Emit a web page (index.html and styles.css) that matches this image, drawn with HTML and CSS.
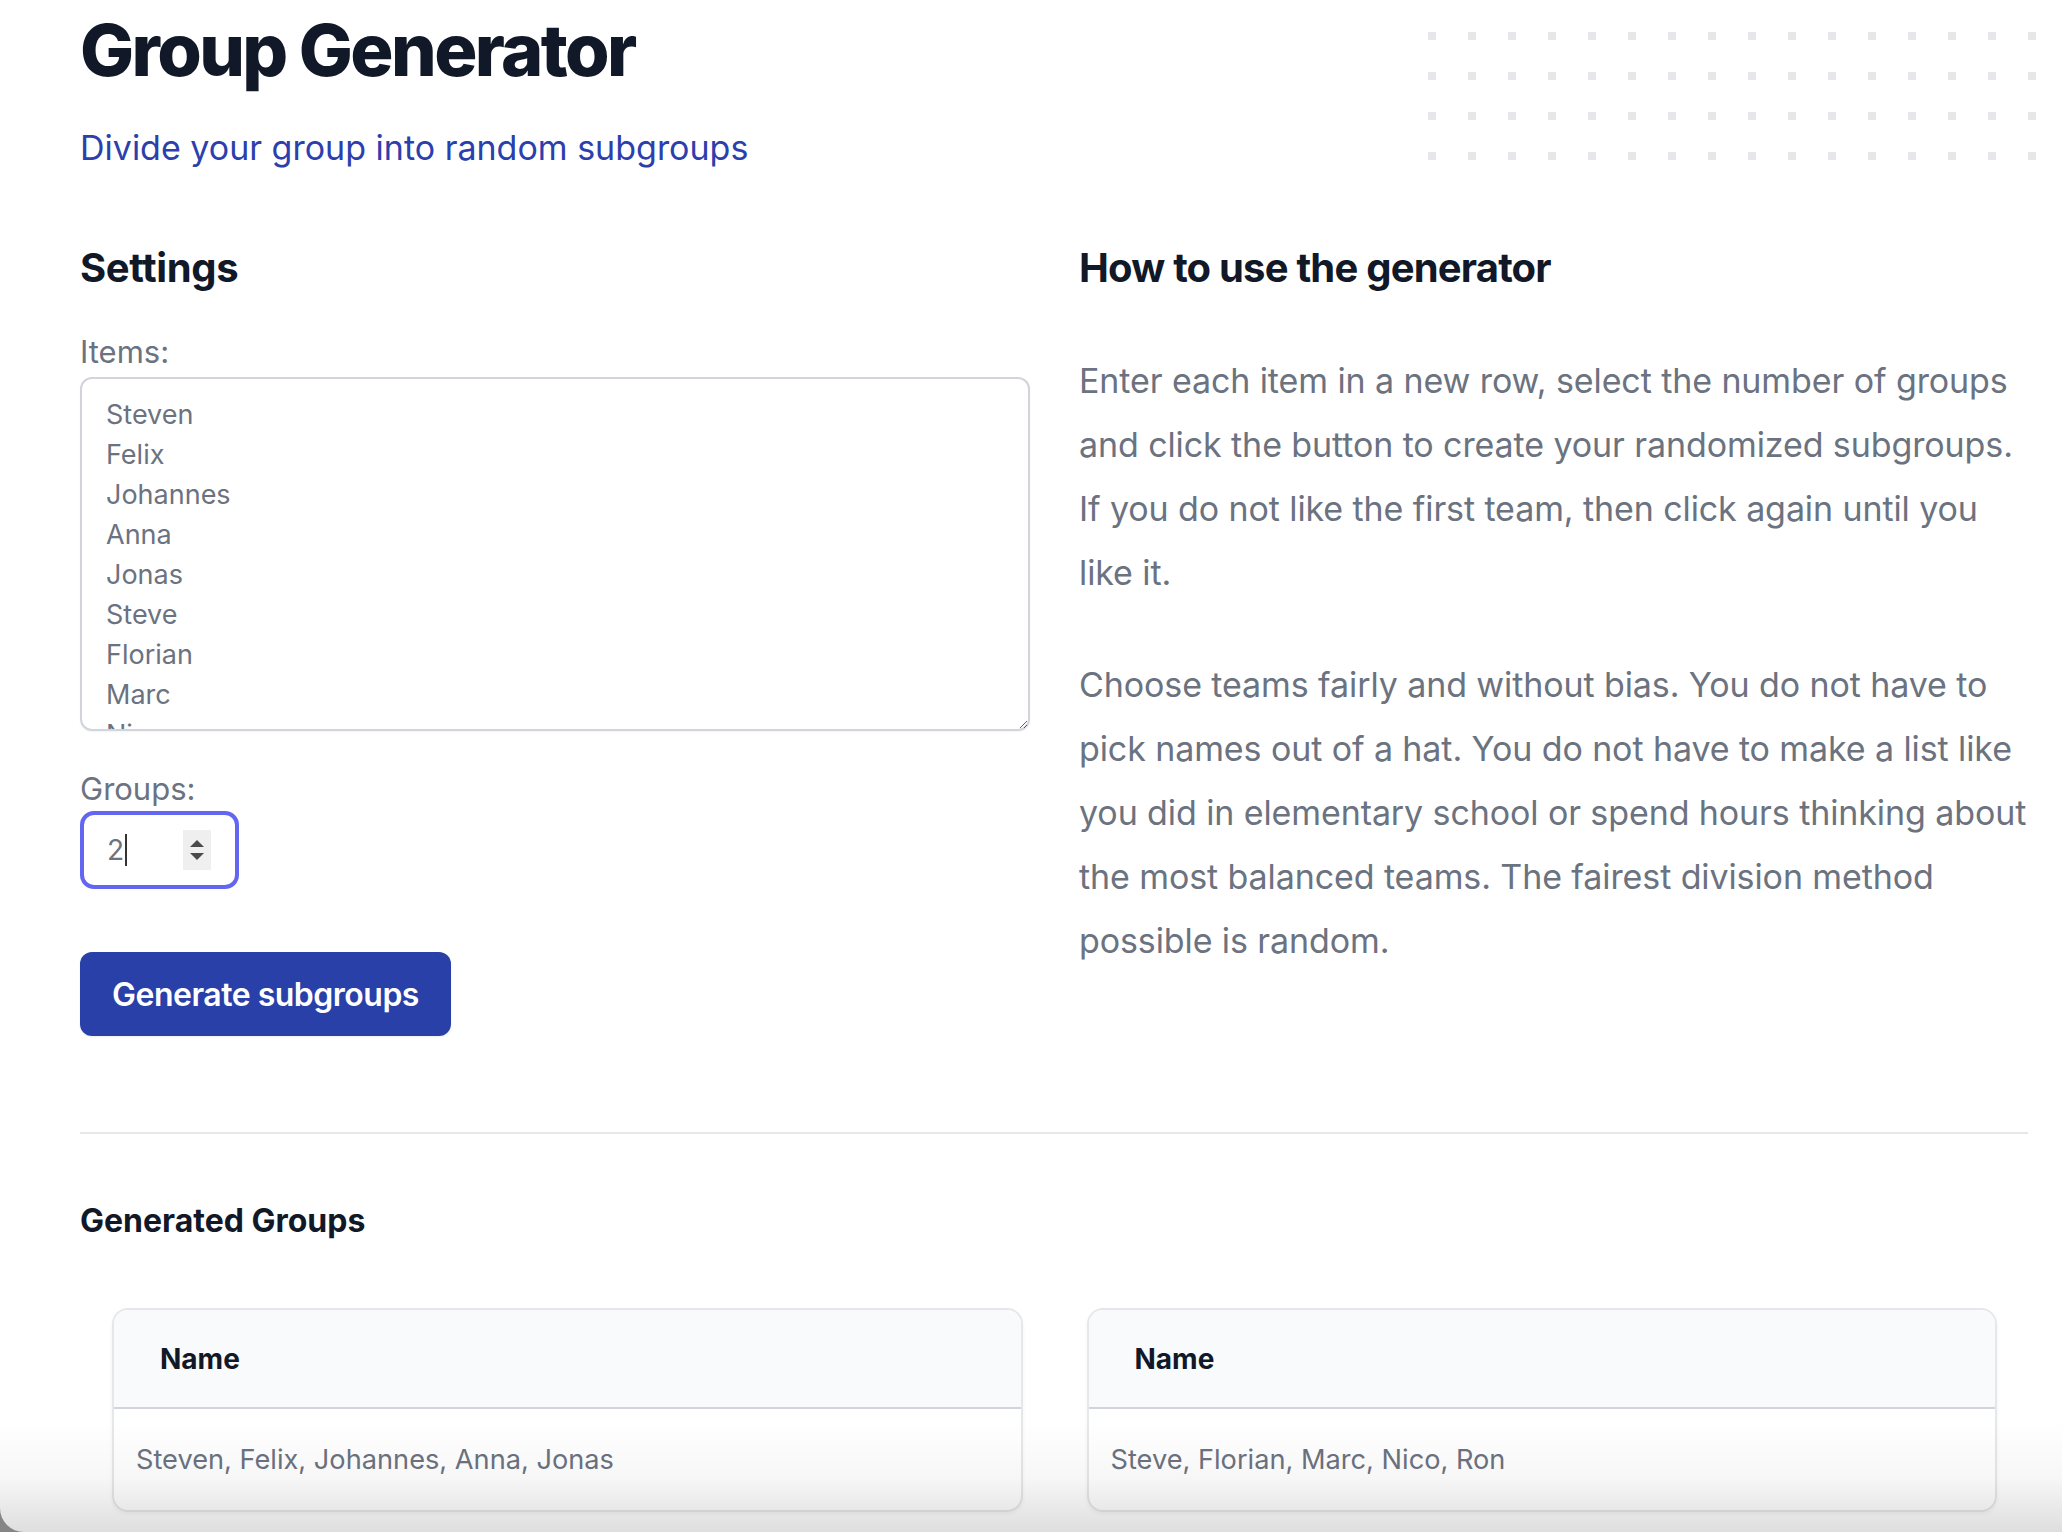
FILE: index.html
```html
<!DOCTYPE html>
<html lang="en">
<head>
<meta charset="utf-8">
<title>Group Generator</title>
<link rel="stylesheet" href="styles.css">
</head>
<body>
<div class="window">
  <svg class="dots" width="608" height="128" aria-hidden="true">
    <defs>
      <pattern id="dotgrid" x="0" y="0" width="40" height="40" patternUnits="userSpaceOnUse">
        <rect x="0" y="0" width="8" height="8" fill="#e5e7eb"></rect>
      </pattern>
    </defs>
    <rect width="608" height="128" fill="url(#dotgrid)"></rect>
  </svg>
  <main class="container">
    <header class="hero">
      <h1 class="title">Group Generator</h1>
      <p class="lead">Divide your group into random subgroups</p>
    </header>

    <section class="columns">
      <div class="settings">
        <h2 class="section-title">Settings</h2>
        <label class="field-label" for="items">Items:</label>
        <textarea id="items" class="items">Steven
Felix
Johannes
Anna
Jonas
Steve
Florian
Marc
Nico
Ron</textarea>
        <label class="field-label groups-label">Groups:</label>
        <div class="number-input">
          <span class="number-value">2</span><span class="caret"></span>
          <span class="spinner">
            <span class="tri-up"></span>
            <span class="tri-down"></span>
          </span>
        </div>
        <button class="generate" type="button">Generate subgroups</button>
      </div>

      <div class="howto">
        <h2 class="section-title">How to use the generator</h2>
        <p class="text">Enter each item in a new row, select the number of groups and click the button to create your randomized subgroups. If you do not like the first team, then click again until you like it.</p>
        <p class="text text-second">Choose teams fairly and without bias. You do not have to pick names out of a hat. You do not have to make a list like you did in elementary school or spend hours thinking about the most balanced teams. The fairest division method possible is random.</p>
      </div>
    </section>

    <hr class="divider">

    <section class="results">
      <h3 class="results-title">Generated Groups</h3>
      <div class="cards">
        <div class="card">
          <div class="card-head">Name</div>
          <div class="card-body">Steven, Felix, Johannes, Anna, Jonas</div>
        </div>
        <div class="card">
          <div class="card-head">Name</div>
          <div class="card-body">Steve, Florian, Marc, Nico, Ron</div>
        </div>
      </div>
    </section>
  </main>
  <div class="fade"></div>
</div>
</body>
</html>
```

FILE: styles.css
```css
* { box-sizing: border-box; }

html, body {
  margin: 0;
  padding: 0;
}

body {
  background: #858585;
  font-family: Inter, "Noto Sans", "Liberation Sans", sans-serif;
}

.window {
  position: relative;
  width: 2062px;
  height: 1532px;
  overflow: hidden;
  background: #ffffff;
  border-bottom-left-radius: 24px;
}

.dots {
  position: absolute;
  left: 1428px;
  top: 32px;
}

.container {
  position: relative;
  padding: 0 34px 0 80px;
}

.title {
  margin: 14px 0 0;
  font-size: 72px;
  line-height: 72px;
  font-weight: 800;
  letter-spacing: -2.6px;
  color: #111827;
}

.lead {
  margin: 38px 0 0;
  font-size: 34px;
  line-height: 48px;
  color: #2b40ad;
}

.columns {
  margin-top: 68px;
  display: grid;
  grid-template-columns: 950px 949px;
  column-gap: 49px;
}

.section-title {
  margin: 0;
  font-size: 40px;
  line-height: 56px;
  font-weight: 700;
  color: #111827;
  letter-spacing: -0.8px;
}

.settings .section-title {
  letter-spacing: -0.4px;
}

.field-label {
  display: block;
  margin-top: 36px;
  font-size: 31px;
  line-height: 40px;
  color: #6b7280;
}

.items {
  display: block;
  margin-top: 5px;
  width: 950px;
  height: 354px;
  padding: 16px 24px 12px;
  border: 2px solid #d1d5db;
  border-radius: 12px;
  font-family: Inter, "Noto Sans", sans-serif;
  font-size: 27px;
  line-height: 40px;
  color: #6b7280;
  resize: vertical;
  overflow: hidden;
  scrollbar-width: none;
  box-shadow: 0 1px 2px rgba(0, 0, 0, 0.05);
  outline: none;
}

.groups-label {
  margin-top: 38px;
}

.number-input {
  margin-top: 2px;
  width: 159px;
  height: 78px;
  border: 4px solid #6366f1;
  border-radius: 14px;
  display: flex;
  align-items: center;
  padding-left: 23px;
}

.number-value {
  font-size: 28px;
  line-height: 40px;
  color: #6b7280;
}

.caret {
  width: 2px;
  height: 32px;
  margin-left: 1px;
  background: #333;
}

.spinner {
  margin-left: auto;
  margin-right: 24px;
  width: 28px;
  height: 40px;
  background: #efefef;
  display: flex;
  flex-direction: column;
  align-items: center;
  justify-content: center;
  gap: 6px;
}

.tri-up, .tri-down {
  width: 0;
  height: 0;
  border-left: 7px solid transparent;
  border-right: 7px solid transparent;
}

.tri-up { border-bottom: 7px solid #4a4a4a; }
.tri-down { border-top: 7px solid #4a4a4a; }

.generate {
  display: block;
  margin-top: 63px;
  height: 84px;
  padding: 0 32px;
  border: none;
  border-radius: 12px;
  background: #2940a8;
  color: #ffffff;
  font-family: Inter, "Noto Sans", sans-serif;
  font-size: 32px;
  font-weight: 600;
  letter-spacing: -0.5px;
  box-shadow: 0 1px 2px rgba(0, 0, 0, 0.08);
}

.text {
  margin: 53px 0 0;
  font-size: 34px;
  line-height: 64px;
  letter-spacing: -0.1px;
  color: #6b7280;
}

.text-second {
  margin-top: 48px;
}

.divider {
  margin: 96px 0 0;
  height: 2px;
  border: none;
  background: #e5e7eb;
}

.results-title {
  margin: 63px 0 0;
  font-size: 32px;
  line-height: 48px;
  font-weight: 700;
  color: #111827;
}

.cards {
  margin-top: 63px;
  padding: 0 31px 0 32px;
  display: grid;
  grid-template-columns: 1fr 1fr;
  column-gap: 64px;
}

.card {
  border: 2px solid #e5e7eb;
  border-radius: 16px;
  overflow: hidden;
  box-shadow: 0 2px 4px rgba(0, 0, 0, 0.05);
}

.card-head {
  height: 99px;
  padding-left: 46px;
  display: flex;
  align-items: center;
  background: #f9fafb;
  border-bottom: 2px solid #d1d5db;
  font-size: 28px;
  font-weight: 700;
  color: #111827;
}

.card-body {
  height: 101px;
  padding-left: 22px;
  display: flex;
  align-items: center;
  font-size: 27.2px;
  color: #6b7280;
}

.fade {
  position: absolute;
  left: 0;
  right: 0;
  bottom: 0;
  height: 110px;
  background: linear-gradient(to bottom, rgba(0, 0, 0, 0) 0%, rgba(0, 0, 0, 0.03) 50%, rgba(0, 0, 0, 0.13) 100%);
  pointer-events: none;
}
```
